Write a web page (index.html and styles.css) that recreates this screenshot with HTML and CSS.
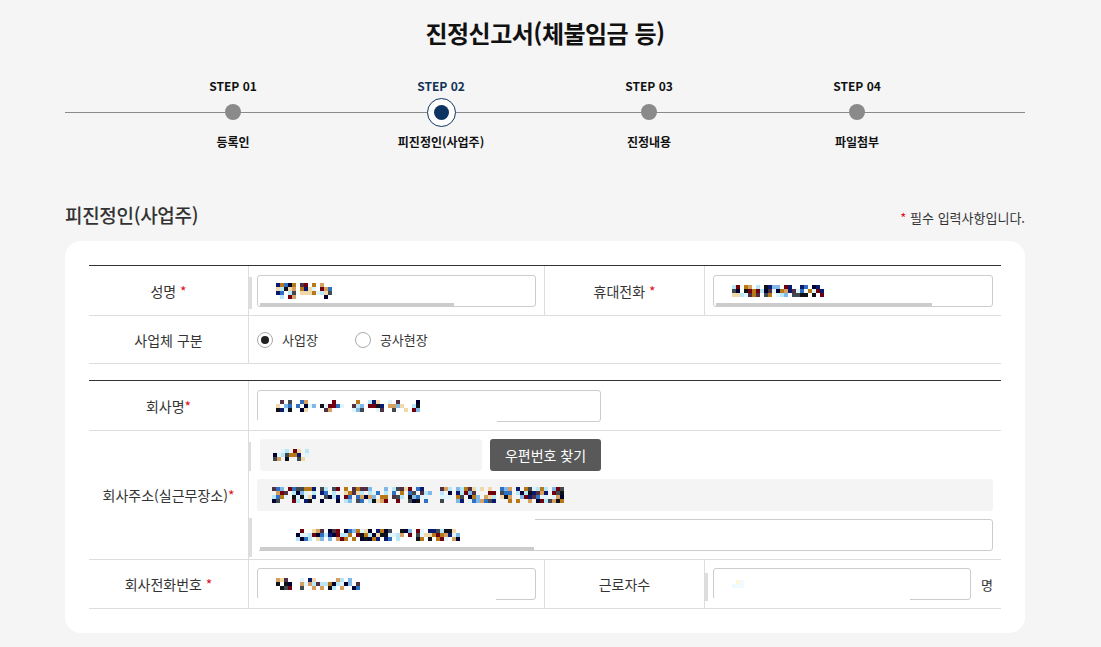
FILE: index.html
```html
<!DOCTYPE html>
<html lang="ko">
<head>
<meta charset="utf-8">
<title>진정신고서(체불임금 등)</title>
<link rel="stylesheet" href="styles.css">
</head>
<body>
<div class="page">
  <h1 class="title">진정신고서(체불임금 등)</h1>

  <ol class="steps">
    <li class="step"><span class="step-no">STEP 01</span><span class="dot-wrap"><span class="dot"></span></span><span class="step-name">등록인</span></li>
    <li class="step active"><span class="step-no">STEP 02</span><span class="dot-wrap"><span class="dot"></span></span><span class="step-name">피진정인(사업주)</span></li>
    <li class="step"><span class="step-no">STEP 03</span><span class="dot-wrap"><span class="dot"></span></span><span class="step-name">진정내용</span></li>
    <li class="step"><span class="step-no">STEP 04</span><span class="dot-wrap"><span class="dot"></span></span><span class="step-name">파일첨부</span></li>
  </ol>

  <div class="sec-head">
    <h2 class="sec-title">피진정인(사업주)</h2>
    <p class="req-note"><span class="req">*</span> 필수 입력사항입니다.</p>
  </div>

  <div class="card">
    <div class="form-table">
      <div class="th"><span>성명 <span class="req">*</span></span></div>
      <div class="td pt9">
        <div class="field lbar"><span class="mosaic" data-cols="14" data-rows="4" data-seed="7"></span><span class="hbar hb-name"></span></div>
      </div>
      <div class="th"><span>휴대전화 <span class="req">*</span></span></div>
      <div class="td pt9 last">
        <div class="field"><span class="mosaic" data-cols="23" data-rows="3" data-seed="19"></span><span class="hbar hb-phone"></span></div>
      </div>

      <div class="th"><span>사업체 구분</span></div>
      <div class="td span3 last radios">
        <label class="radio checked"><span class="circle"></span>사업장</label>
        <label class="radio"><span class="circle"></span>공사현장</label>
      </div>
    </div>

    <div class="form-table second">
      <div class="th"><span>회사명<span class="req">*</span></span></div>
      <div class="td pt9 span3 last">
        <div class="field w-company"><span class="mosaic" data-cols="36" data-rows="3" data-seed="31" data-gap="17"></span><span class="mask-b mb-company"></span></div>
      </div>

      <div class="th"><span>회사주소(실근무장소)<span class="req">*</span></span></div>
      <div class="td span3 last addr">
        <div class="addr-row">
          <div class="zip lbar"><span class="mosaic" data-cols="9" data-rows="3" data-seed="43"></span></div>
          <button class="btn-zip" type="button">우편번호 찾기</button>
        </div>
        <div class="addr-main"><span class="mosaic" data-cols="73" data-rows="4" data-seed="57" data-gap="40"></span></div>
        <div class="field addr-detail lbar"><span class="mosaic" data-cols="46" data-rows="3" data-seed="71"></span><span class="mask-t"></span><span class="mask-l"></span><span class="hbar hb-detail"></span></div>
      </div>

      <div class="th"><span>회사전화번호 <span class="req">*</span></span></div>
      <div class="td">
        <div class="field"><span class="mosaic" data-cols="21" data-rows="3" data-seed="89" data-gap="4"></span><span class="mask-b mb-tel"></span></div>
      </div>
      <div class="th"><span>근로자수</span></div>
      <div class="td last count">
        <div class="field lbar grow"><span class="mosaic" data-cols="3" data-rows="2" data-seed="5" data-pale="1"></span><span class="mask-b mb-count"></span></div>
        <span class="unit">명</span>
      </div>
    </div>
  </div>
</div>
<script src="mosaic.js"></script>
</body>
</html>
```

FILE: styles.css
```css
* { box-sizing: border-box; }

body {
  margin: 0;
  background: #f5f5f5;
  font-family: "Noto Sans CJK KR", "Noto Sans", sans-serif;
  color: #333;
}

.page {
  width: 960px;
  margin-left: 65px;
  padding-top: 16px;
}

.title {
  margin: 0;
  text-align: center;
  font-size: 24px;
  line-height: 34px;
  font-weight: 700;
  color: #111;
  letter-spacing: -0.5px;
}

/* steps */
.steps {
  list-style: none;
  margin: 27px 0 0;
  padding: 0 64px;
  display: flex;
  position: relative;
}
.steps::before {
  content: "";
  position: absolute;
  left: 0;
  right: 0;
  top: 35px;
  height: 1px;
  background: #8a8a8a;
}
.step {
  flex: 1;
  display: flex;
  flex-direction: column;
  align-items: center;
  position: relative;
  z-index: 1;
}
.step-no {
  font-size: 12px;
  font-weight: 700;
  line-height: 18px;
  color: #111;
}
.dot-wrap {
  height: 30px;
  margin-top: 2px;
  display: flex;
  align-items: center;
  justify-content: center;
}
.dot {
  width: 16px;
  height: 16px;
  border-radius: 50%;
  background: #8a8a8a;
}
.step-name {
  margin-top: 6px;
  font-size: 12px;
  font-weight: 700;
  line-height: 18px;
  color: #111;
}
.active .step-no { color: #123258; }
.active .dot {
  width: 29px;
  height: 29px;
  background: #fff;
  border: 1.5px solid #0e3562;
  display: flex;
  align-items: center;
  justify-content: center;
}
.active .dot::after {
  content: "";
  width: 15px;
  height: 15px;
  border-radius: 50%;
  background: #0e3562;
}

/* section header */
.sec-head {
  margin-top: 50px;
  display: flex;
  justify-content: space-between;
  align-items: baseline;
}
.sec-title {
  margin: 0;
  font-size: 19px;
  line-height: 28px;
  font-weight: 500;
  color: #333;
  letter-spacing: -0.3px;
}
.req-note {
  margin: 0;
  font-size: 13px;
  color: #333;
}
.req { color: #e0101e; }

/* card */
.card {
  margin-top: 12px;
  background: #fff;
  border-radius: 16px;
  padding: 24px;
}

.form-table {
  display: grid;
  grid-template-columns: 160px 296px 160px 296px;
  border-top: 1px solid #333;
}
.form-table.second { margin-top: 16px; }

.th, .td {
  border-bottom: 1px solid #ddd;
  border-right: 1px solid #ddd;
}
.th {
  display: flex;
  align-items: center;
  justify-content: center;
  font-size: 14px;
  color: #333;
}
.td {
  padding: 8px;
}
.td.pt9 { padding-top: 9px; }
.td.last { border-right: none; }
.span3 { grid-column: span 3; }

/* fields */
.field {
  height: 32px;
  border: 1px solid #ccc;
  border-radius: 3px;
  background: #fff;
  position: relative;
  display: flex;
  align-items: center;
  padding-left: 18px;
}
.mosaic { display: block; line-height: 0; }
.mosaic svg { display: block; }

.lbar::before {
  content: "";
  position: absolute;
  left: -9px;
  top: 1px;
  bottom: -3px;
  width: 3px;
  background: #ddd;
}
.hbar {
  position: absolute;
  left: 2px;
  bottom: 0;
  height: 3px;
  background: #ccc;
}
.hb-name { width: 194px; }
.hb-phone { width: 216px; }
.hb-detail { width: 274px; }

.mask-b {
  position: absolute;
  left: -1px;
  bottom: -1px;
  height: 2px;
  background: #fff;
}
.mb-company { width: 240px; }
.mb-tel { width: 239px; }
.mb-count { width: 197px; }
.mask-t {
  position: absolute;
  left: -1px;
  top: -1px;
  width: 278px;
  height: 2px;
  background: #fff;
}
.mask-l {
  position: absolute;
  left: -1px;
  top: -1px;
  bottom: -1px;
  width: 2px;
  background: #fff;
}

.w-company { width: 344px; }

/* radios */
.radios {
  height: 48px;
  display: flex;
  align-items: center;
  padding: 0 8px;
}
.radio {
  display: flex;
  align-items: center;
  font-size: 13px;
  color: #333;
  margin-right: 37px;
}
.circle {
  width: 16px;
  height: 16px;
  border: 1px solid #aaa;
  border-radius: 50%;
  margin-right: 9px;
  display: flex;
  align-items: center;
  justify-content: center;
  background: #fff;
}
.checked .circle::after {
  content: "";
  width: 8px;
  height: 8px;
  border-radius: 50%;
  background: #222;
}

/* address */
.addr {
  display: flex;
  flex-direction: column;
  gap: 8px;
}
.addr-row {
  display: flex;
  gap: 8px;
}
.zip {
  position: relative;
  margin-left: 3px;
  width: 222px;
  height: 32px;
  background: #f4f4f4;
  border-radius: 3px;
  display: flex;
  align-items: center;
  padding-left: 13px;
}
.zip.lbar::before { left: -12px; top: 3px; bottom: 0; }
.btn-zip {
  width: 111px;
  height: 32px;
  border: none;
  border-radius: 3px;
  background: #595959;
  color: #fff;
  font-family: inherit;
  font-size: 14px;
  padding: 0;
}
.addr-main {
  width: 736px;
  height: 32px;
  background: #f4f4f4;
  border-radius: 3px;
  display: flex;
  align-items: center;
  padding-left: 15px;
}
.addr-detail { width: 736px; }
.addr-detail.lbar::before { top: -2px; bottom: -7px; }

/* count */
.count {
  display: flex;
  align-items: center;
}
.grow { flex: 1; }
.count .lbar::before { top: 4px; bottom: -2px; }
.unit {
  font-size: 13px;
  color: #333;
  margin-left: 10px;
  margin-right: 0;
}
```

FILE: mosaic.js
```js
(function () {
  var pal = ["#101018", "#0a1a70", "#700010", "#b87818", "#d8a060", "#f0d8a8",
             "#3070c0", "#80b8e8", "#b8e8f8", "#e0f4fc", "#404850", "#503040", "#000030"];
  var pale = ["#fff8d8", "#e0f6ff", "#f0fbff"];
  var ns = "http://www.w3.org/2000/svg";
  function rng(seed) {
    var s = seed;
    return function () { s = (s * 9301 + 49297) % 233280; return s / 233280; };
  }
  var list = document.querySelectorAll(".mosaic");
  for (var i = 0; i < list.length; i++) {
    var el = list[i];
    var cols = +el.getAttribute("data-cols");
    var rows = +el.getAttribute("data-rows");
    var seed = +el.getAttribute("data-seed") || 1;
    var gap = el.hasAttribute("data-gap") ? +el.getAttribute("data-gap") : -1;
    var p = el.hasAttribute("data-pale") ? pale : pal;
    var R = rng(seed);
    var svg = document.createElementNS(ns, "svg");
    svg.setAttribute("width", cols * 4);
    svg.setAttribute("height", rows * 4);
    svg.setAttribute("shape-rendering", "crispEdges");
    for (var x = 0; x < cols; x++) {
      if (gap >= 0 && (x === gap || x === gap + 1)) continue;
      if (R() < 0.08) continue;
      for (var y = 0; y < rows; y++) {
        var mid = (y > 0 && y < rows - 1) ? 0.88 : 0.6;
        if (R() < mid) {
          var r = document.createElementNS(ns, "rect");
          r.setAttribute("x", x * 4);
          r.setAttribute("y", y * 4);
          r.setAttribute("width", 4);
          r.setAttribute("height", 4);
          r.setAttribute("fill", p[Math.floor(R() * p.length)]);
          svg.appendChild(r);
        }
      }
    }
    el.appendChild(svg);
  }
})();
```
